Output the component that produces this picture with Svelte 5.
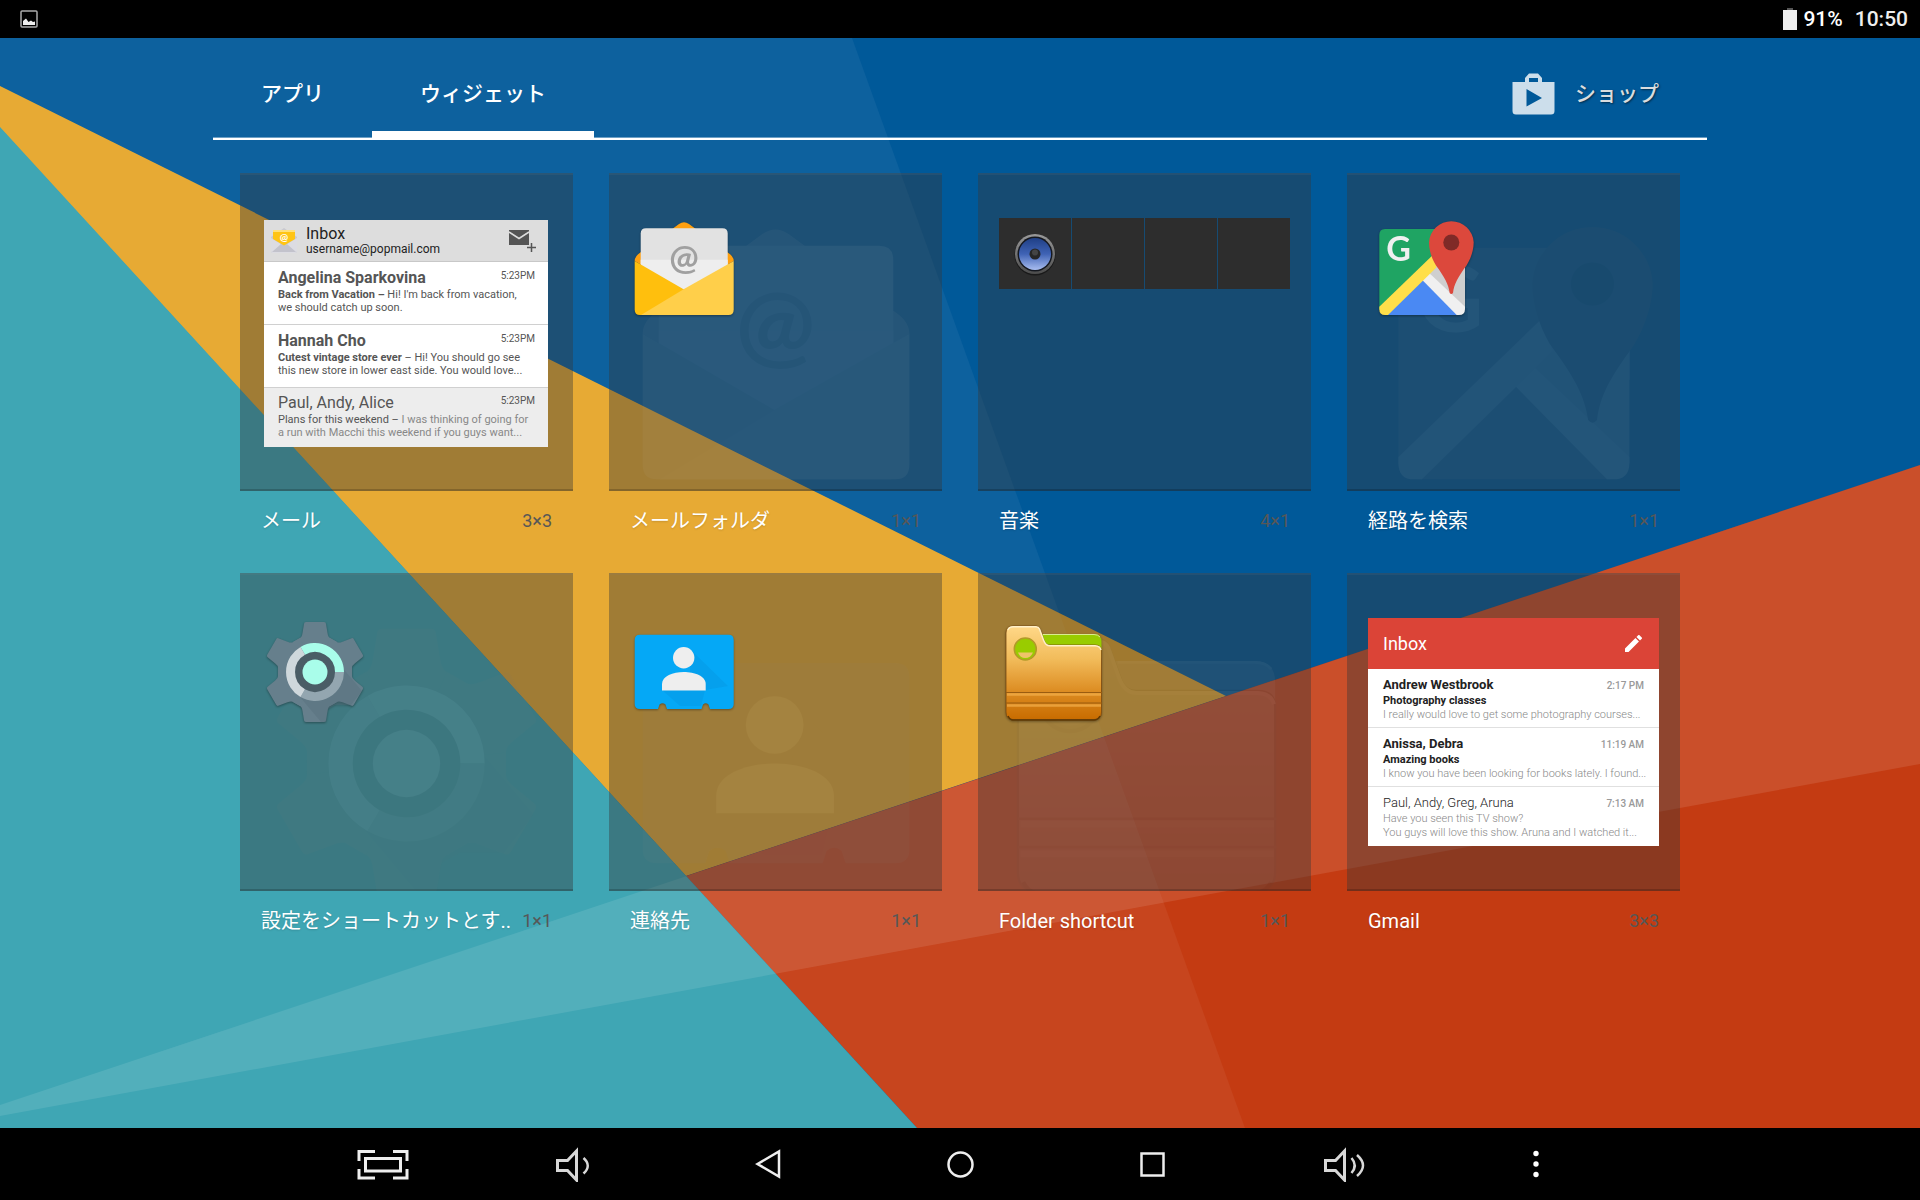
<script>
  const widgets = [
    { name: "メール", size: "3×3", kind: "mail" },
    { name: "メールフォルダ", size: "1×1", kind: "icon", icon: "envelope" },
    { name: "音楽", size: "4×1", kind: "music" },
    { name: "経路を検索", size: "1×1", kind: "icon", icon: "maps" },
    { name: "設定をショートカットとす..", size: "1×1", kind: "icon", icon: "gear" },
    { name: "連絡先", size: "1×1", kind: "icon", icon: "contacts" },
    { name: "Folder shortcut", size: "1×1", kind: "icon", icon: "folder" },
    { name: "Gmail", size: "3×3", kind: "gmail" },
  ];

  const mails = [
    {
      from: "Angelina Sparkovina",
      time: "5:23PM",
      subject: "Back from Vacation –",
      lines: ["Hi! I'm back from vacation,", "we should catch up soon."],
    },
    {
      from: "Hannah Cho",
      time: "5:23PM",
      subject: "Cutest vintage store ever",
      lines: ["– Hi! You should go see", "this new store in lower east side. You would love..."],
    },
    {
      from: "Paul, Andy, Alice",
      time: "5:23PM",
      subject: "Plans for this weekend –",
      lines: ["I was thinking of going for", "a run with Macchi this weekend if you guys want..."],
      read: true,
    },
  ];

  const gmails = [
    {
      from: "Andrew Westbrook",
      time: "2:17 PM",
      subject: "Photography classes",
      text: "I really would love to get some photography courses...",
    },
    {
      from: "Anissa, Debra",
      time: "11:19 AM",
      subject: "Amazing books",
      text: "I know you have been looking for books lately. I found...",
    },
    {
      from: "Paul, Andy, Greg, Aruna",
      time: "7:13 AM",
      subject: "Have you seen this TV show?",
      text: "You guys will love this show. Aruna and I watched it...",
      read: true,
    },
  ];

  const navItems = [
    { icon: "fullscreen", label: "全画面" },
    { icon: "volume-down", label: "音量を下げる" },
    { icon: "back", label: "戻る" },
    { icon: "home", label: "ホーム" },
    { icon: "recents", label: "最近使ったアプリ" },
    { icon: "volume-up", label: "音量を上げる" },
    { icon: "menu", label: "メニュー" },
  ];

  let tab = $state("widgets");

  const teeth = [0, 60, 120, 180, 240, 300];
</script>

{#snippet envelope()}
  <path d="M4.700 43Q4.700 38 11 34L49 6Q54 2.500 59 6L97 34Q103.700 38 103.700 43L54 72Z" fill="#ffa010" />
  <path d="M10.700 15.500Q10.700 10.300 16 10.300H92.500Q97.700 10.300 97.700 15.500V48L54 72L10.700 48Z" fill="#e2e2e2" />
  <path d="M10.700 41.700H97.700V48L54 72L10.700 48Z" fill="#eee" />
  <text class="at" x="54" y="52" text-anchor="middle">@</text>
  <path d="M4.700 43L54 71.500L97 97H10Q4.700 97 4.700 91.500Z" fill="#ffbf0d" />
  <path d="M103.700 43V91.500Q103.700 97 98.500 97H11L54 71Z" fill="#ffcf4a" />
{/snippet}

{#snippet maps()}
  <path d="M17 11H97V60L60 62L11.300 92V17Q11.300 11 17 11Z" fill="#1fa463" />
  <path d="M61 55L97 22V91H90Z" fill="#cfcfcf" />
  <path d="M54.300 61L90 97H18Z" fill="#4a89f3" />
  <path d="M54.300 62L61.300 55L97 88.700V91Q97 97 91 97H88.700Z" fill="#f0f0f0" />
  <path d="M11.300 88.700L68 34L74 44L20 97H17Q11.300 97 11.300 91Z" fill="#ffdf4a" />
  <path d="M68 48L97 30V60L84 76Z" fill="#cfcfcf" />
  <text class="g" x="30.500" y="42.500" text-anchor="middle">G</text>
  <path
    d="M61 24.200A22.400 22.400 0 0 1 105.700 24.200C105.700 33 102 42 98.500 47.500C90 59 86 66 85 75Q83.300 77 81.700 75C80.500 66 76.500 59 68 47.500C64.500 42 61 33 61 24.200Z"
    fill="#dc483c"
  />
  <circle cx="83.300" cy="24.500" r="8" fill="#7f2a27" />
{/snippet}

{#snippet gear()}
  <g transform="translate(54 54)" fill="#667f8c">
    <circle r="36.500" />
    {#each teeth as angle}
      <path
        transform="rotate({angle})"
        d="M-22 -30L-15 -34Q-13 -35 -12.500 -39L-11 -48Q-11 -50 -9 -50H9Q11 -50 11 -48L12.500 -39Q13 -35 15 -34L22 -30L0 0Z"
      />
    {/each}
  </g>
  <path d="M39 79L60 104H65L67 91L74 87L90 87L101 73L75 42Z" fill="#566f7b" opacity="0.4" />
  <circle cx="54" cy="54" r="21" fill="#4a5d66" />
  <g fill="none" stroke-width="9">
    <path d="M41.750 32.800A24.500 24.500 0 0 1 78.500 54" stroke="#a9fdea" />
    <path d="M78.500 54A24.500 24.500 0 0 1 41.750 75.200" stroke="#93a6b0" />
    <path d="M41.750 75.200A24.500 24.500 0 0 1 41.750 32.800" stroke="#cfd8dc" />
  </g>
  <circle cx="54" cy="54" r="12.500" fill="#a9fdea" />
{/snippet}

{#snippet contacts()}
  <path
    d="M10 16.700H98.500Q103.700 16.700 103.700 22V86Q103.700 91 98.500 91H80L78.500 86.500Q75.700 84 73 86.500L71.500 91H37L35.500 86.500Q32.500 84 29.500 86.500L28 91H10Q4.700 91 4.700 86V22Q4.700 16.700 10 16.700Z"
    fill="#05a8f6"
  />
  <path d="M61 32L98 68L75 72L60 55ZM32 72H75L71 88H50Z" fill="#0590d8" opacity="0.3" />
  <circle cx="53.700" cy="39.700" r="10.700" fill="#eee" />
  <path d="M32 72.500V66C32 58 43 54 53.800 54S75.700 58 75.700 66V72.500Z" fill="#eee" />
{/snippet}

{#snippet folder()}
  <defs>
    <linearGradient id="folder-front" x1="0" y1="0" x2="0" y2="1">
      <stop offset="0" stop-color="#ffd888" />
      <stop offset="0.350" stop-color="#f2bc5b" />
      <stop offset="0.700" stop-color="#dc8c22" />
      <stop offset="1" stop-color="#c86c00" />
    </linearGradient>
  </defs>
  <path d="M40 16H95Q102.500 16 102.500 24V40H40Z" fill="#99cc00" />
  <path d="M44 16.500H95Q99 16.500 101 19" fill="none" stroke="#d8ec90" />
  <path
    d="M7 15Q7 8 14 8H37Q40 8 41 11L45 22Q46.500 27 51 27H96Q102.500 27 102.500 33V94Q102.500 101.500 95 101.500H14Q7 101.500 7 94Z"
    fill="url(#folder-front)"
    stroke="#7a4a10"
    stroke-width="0.800"
  />
  <path d="M9 12Q10 8.800 14 8.800H37Q39.500 8.800 40.500 11L44.500 22Q46.500 27.800 51 27.800H96Q101 28 102 32" fill="none" stroke="#fff0c8" stroke-width="1.500" />
  <path d="M7 74.500H103M7 85H103" stroke="#9a5c10" />
  <path d="M8 76.500H102M8 87.500H102" stroke="#f3b04c" stroke-width="2.500" opacity="0.700" />
  <path d="M9 98Q11 102 14 102H95Q99 102 101 98" fill="none" stroke="#5e3804" stroke-width="1.500" />
  <circle cx="26.300" cy="31" r="11" fill="#99cc00" stroke="#b19a28" stroke-width="1.500" />
  <path d="M19 34.500H34Q31.500 40 26.300 40T19 34.500Z" fill="#efc36a" />
{/snippet}

{#snippet artwork(name)}
  {#if name === "envelope"}
    {@render envelope()}
  {:else if name === "maps"}
    {@render maps()}
  {:else if name === "gear"}
    {@render gear()}
  {:else if name === "contacts"}
    {@render contacts()}
  {:else}
    {@render folder()}
  {/if}
{/snippet}

{#snippet mailWidget()}
  <div class="mail">
    <div class="mail__header">
      <svg class="mail__logo" viewBox="0 0 28 28" aria-hidden="true">
        <path d="M1 10L14 1L27 10V24Q27 26 25 26H3Q1 26 1 24Z" fill="#c9c9cf" />
        <path d="M1 11V24Q1 26 3 26H25Q27 26 27 24V11L14 19Z" fill="#dcdce2" />
        <path d="M2 25L11 17L14 18L17 17L26 25Z" fill="#c3c3cc" />
        <path d="M3 3H25V12L14 18.500L3 12Z" fill="#ffc414" />
        <path d="M3 3H25V5H3Z" fill="#ffe07a" />
        <text class="mail__at" x="14" y="13.500" text-anchor="middle">@</text>
      </svg>
      <div class="mail__account">
        <span class="mail__title">Inbox</span>
        <span class="mail__address">username@popmail.com</span>
      </div>
      <svg class="mail__compose" viewBox="0 0 28 24" aria-hidden="true">
        <path d="M0 1H20V16H0Z" fill="#555" />
        <path d="M0 3L10 9.500L20 3" fill="none" stroke="#ddd" stroke-width="1.500" />
        <path d="M22.500 14V23M18 18.500H27" stroke="#555" stroke-width="1.500" />
      </svg>
    </div>
    {#each mails as mail}
      <div class="mail__row" class:mail__row--read={mail.read}>
        <div class="mail__top">
          <span class="mail__from">{mail.from}</span>
          <span class="mail__time">{mail.time}</span>
        </div>
        <div class="mail__text"><span class="mail__subject">{mail.subject}</span> {mail.lines[0]}</div>
        <div class="mail__text">{mail.lines[1]}</div>
      </div>
    {/each}
  </div>
{/snippet}

{#snippet musicWidget()}
  <div class="music">
    <div class="music__tile">
      <svg class="music__speaker" viewBox="0 0 44 44" aria-hidden="true">
        <defs>
          <linearGradient id="cone" x1="0" y1="0" x2="0" y2="1">
            <stop offset="0" stop-color="#1f3f86" />
            <stop offset="0.500" stop-color="#3f63b5" />
            <stop offset="1" stop-color="#a9bdf0" />
          </linearGradient>
          <linearGradient id="rim" x1="0" y1="0" x2="0" y2="1">
            <stop offset="0" stop-color="#9a9a9a" />
            <stop offset="1" stop-color="#4c4c4c" />
          </linearGradient>
        </defs>
        <circle cx="22" cy="23" r="20.500" fill="#1a1a1a" />
        <circle cx="22" cy="22" r="20" fill="url(#rim)" />
        <circle cx="22" cy="22" r="17.500" fill="#15181f" />
        <circle cx="22" cy="22" r="16" fill="url(#cone)" />
        <circle cx="22" cy="22" r="5.500" fill="#262626" />
        <circle cx="22" cy="20.500" r="3" fill="#444" />
      </svg>
    </div>
    <div class="music__tile"></div>
    <div class="music__tile"></div>
    <div class="music__tile"></div>
  </div>
{/snippet}

{#snippet gmailWidget()}
  <div class="gmail">
    <div class="gmail__header">
      <span>Inbox</span>
      <svg class="gmail__pencil" viewBox="3 3 18 18" aria-hidden="true">
        <path
          d="M3 17.250V21h3.750L17.810 9.940l-3.750-3.750L3 17.250zM20.710 7.040a1 1 0 0 0 0-1.410l-2.340-2.340a1 1 0 0 0-1.410 0l-1.830 1.830 3.750 3.750 1.830-1.830z"
          fill="#fff"
        />
      </svg>
    </div>
    {#each gmails as mail}
      <div class="gmail__row" class:gmail__row--read={mail.read}>
        <div class="gmail__top">
          <span class="gmail__from">{mail.from}</span>
          <span class="gmail__time">{mail.time}</span>
        </div>
        <div class="gmail__subject">{mail.subject}</div>
        <div class="gmail__text">{mail.text}</div>
      </div>
    {/each}
  </div>
{/snippet}

<div class="screen">
  <header class="status">
    <svg class="status__image" viewBox="0 0 18 18" aria-hidden="true">
      <rect x="1" y="1" width="16" height="16" rx="1" fill="none" stroke="#aaa" stroke-width="1.500" />
      <path d="M3 15V11L6 8.500L8.500 12L11 10.500L13 12L15 11.500V15Z" fill="#eee" />
    </svg>
    <div class="status__right">
      <svg class="status__battery" viewBox="0 0 14 22" aria-hidden="true">
        <rect x="4" width="6" height="3" fill="#555" />
        <rect y="2" width="14" height="20" fill="#eee" />
      </svg>
      <span class="status__charge">91%</span>
      <time class="status__clock">10:50</time>
    </div>
  </header>

  <main class="drawer">
    <svg class="wallpaper" viewBox="0 38 1920 1090" preserveAspectRatio="none" aria-hidden="true">
      <rect y="38" width="1920" height="1090" fill="#005999" />
      <path d="M0 86L1226 696L686 876L0 128Z" fill="#e6a62a" />
      <path d="M1920 465L686 876L917 1128H1920Z" fill="#c43b12" />
      <path d="M0 38H852L1245 1128H0Z" fill="#fff" opacity="0.050" />
      <path d="M0 127L917 1128H0Z" fill="#3fa6b4" />
      <path d="M0 1105L1920 465V764L0 1116Z" fill="#fff" opacity="0.100" />
    </svg>

    <div class="content">
      <nav class="tabs">
        <button class="tab" class:tab--active={tab === "apps"} onclick={() => (tab = "apps")}>アプリ</button>
        <button class="tab" class:tab--active={tab === "widgets"} onclick={() => (tab = "widgets")}>ウィジェット</button>
        <button class="shop">
          <svg class="shop__icon" viewBox="0 0 43 42" aria-hidden="true">
            <path
              fill-rule="evenodd"
              d="M13 9V5L17 0.500H26L30 5V9H42.500V38Q42.500 41.500 39 41.500H4Q0.500 41.500 0.500 38V9ZM17 9H26V5H17ZM14.500 16V33.500L30 25Z"
              fill="#ccdeeb"
            />
          </svg>
          ショップ
        </button>
      </nav>

      <ul class="grid">
        {#each widgets as widget}
          <li class="widget">
            <div class="card">
              {#if widget.kind === "mail"}
                {@render mailWidget()}
              {:else if widget.kind === "music"}
                {@render musicWidget()}
              {:else if widget.kind === "gmail"}
                {@render gmailWidget()}
              {:else}
                <svg class="card__ghost" viewBox="0 0 108 108" aria-hidden="true">
                  {@render artwork(widget.icon)}
                </svg>
                <svg class="card__icon" viewBox="0 0 108 108" aria-hidden="true">
                  {@render artwork(widget.icon)}
                </svg>
              {/if}
            </div>
            <div class="caption">
              <span class="caption__name">{widget.name}</span>
              <span class="caption__size">{widget.size}</span>
            </div>
          </li>
        {/each}
      </ul>
    </div>
  </main>

  <footer class="navbar">
    {#each navItems as item}
      <button class="navbar__button" aria-label={item.label}>
        <svg class="navbar__icon" viewBox="-28 -18 56 36" aria-hidden="true">
          {#if item.icon === "fullscreen"}
            <path d="M-25 -3V-12.500H-9M9 -12.500H23V-3M23 5V14H9M-9 14H-25V5" />
            <rect x="-18.500" y="-5.500" width="35" height="12.500" />
          {:else if item.icon === "volume-down"}
            <path d="M0.500 -13V16L-8.500 6.500H-18.500V-3.500H-8.500Z" class="dim" />
            <path d="M7.500 -6Q16 1.500 7.500 9.500" class="dim thin" />
          {:else if item.icon === "back"}
            <path d="M-10.500 0L11 -12.500V12.500Z" class="thin" />
          {:else if item.icon === "home"}
            <circle cx="0.500" cy="0.500" r="12" class="thin" />
          {:else if item.icon === "recents"}
            <rect x="-10.500" y="-10.500" width="22" height="22" class="thin" />
          {:else if item.icon === "volume-up"}
            <path d="M0.500 -13V16L-8.500 6.500H-18.500V-3.500H-8.500Z" class="dim" />
            <path d="M7.500 -6Q14 1.500 7.500 9M13 -9Q25 1.500 13 12" class="dim thin" />
          {:else}
            <g class="dots">
              <circle cy="-10.500" r="2.700" />
              <circle cy="0" r="2.700" />
              <circle cy="10.500" r="2.700" />
            </g>
          {/if}
        </svg>
      </button>
    {/each}
  </footer>
</div>

<style>
  :global(body) {
    margin: 0;
    background-color: #000;
  }

  .screen {
    min-height: 100vh;
    display: flex;
    flex-direction: column;
    font-family: Roboto, "Noto Sans CJK JP", sans-serif;
    color: #fff;
  }

  button {
    margin: 0;
    padding: 0;
    border: 0;
    background: none;
    color: inherit;
    font: inherit;
    cursor: pointer;
  }

  .status {
    height: 38px;
    padding: 0 12px 0 20px;
    display: flex;
    align-items: center;
    justify-content: space-between;
    background-color: #000;
  }

  .status__image {
    width: 18px;
    height: 18px;
  }

  .status__right {
    display: flex;
    align-items: center;
    font-size: 21px;
    font-weight: 500;
    line-height: 24px;
  }

  .status__battery {
    width: 14px;
    height: 22px;
    margin-right: 6px;
  }

  .status__clock {
    margin-left: 12px;
    color: #eee;
  }

  .drawer {
    position: relative;
    flex: 1;
  }

  .wallpaper {
    position: absolute;
    inset: 0;
    width: 100%;
    height: 100%;
  }

  .content {
    position: relative;
    margin: 0 213px;
  }

  .tabs {
    height: 100px;
    display: flex;
    border-bottom: 2px solid #fff;
    box-shadow: inset 0 -1px rgba(255, 255, 255, 0.4);
    font-size: 21px;
    font-weight: 500;
    line-height: 24px;
  }

  .tab {
    padding: 12px 48px 0;
    border-top: 7px solid transparent;
    border-bottom: 7px solid transparent;
  }

  .tab--active {
    border-bottom-color: #fff;
  }

  .shop {
    margin-left: auto;
    padding: 12px 48px 0 0;
    display: flex;
    align-items: center;
    gap: 20px;
    color: #d9dcde;
    text-shadow: 1px 1px 2px rgba(0, 0, 0, 0.5);
  }

  .shop__icon {
    width: 43px;
    height: 42px;
  }

  .grid {
    margin: 0;
    padding: 33px 27px 0;
    display: grid;
    grid-template-columns: repeat(4, minmax(0, 1fr));
    column-gap: 36px;
    list-style: none;
  }

  .card {
    position: relative;
    height: 318px;
    box-sizing: border-box;
    padding: 45px 21px 0;
    overflow: hidden;
    background-color: rgba(55, 55, 55, 0.4);
    box-shadow:
      inset 0 2px rgba(130, 130, 130, 0.12),
      inset 0 -2px rgba(0, 0, 0, 0.18);
  }

  .card__icon {
    position: relative;
    display: block;
    width: 108px;
    height: 108px;
    filter: drop-shadow(0 1px 1px rgba(0, 0, 0, 0.35));
  }

  .card__ghost {
    position: absolute;
    top: 45px;
    left: 21px;
    width: calc(100% - 42px);
    filter: grayscale(1);
    opacity: 0.06;
  }

  .at {
    font-family: Lato, sans-serif;
    font-size: 35px;
    font-weight: 700;
    fill: #a0a0a0;
  }

  .g {
    font-family: Lato, sans-serif;
    font-size: 34px;
    font-weight: 700;
    fill: #f0f0f0;
  }

  .caption {
    height: 82px;
    box-sizing: border-box;
    padding: 16px 21px 0;
    display: flex;
    justify-content: space-between;
    line-height: 28px;
    white-space: nowrap;
  }

  .caption__name {
    font-size: 20px;
    text-shadow: 0 1px 2px rgba(0, 0, 0, 0.15);
  }

  .caption__name:lang(ja) {
    font-weight: 500;
  }

  .caption__size {
    font-size: 18px;
    color: #575757;
  }

  .mail {
    margin: 2px 4px 0 3px;
    background-color: #fff;
    color: #555;
  }

  .mail__header {
    height: 42px;
    box-sizing: border-box;
    padding: 0 11px 0 6px;
    display: flex;
    align-items: center;
    background-color: #ddd;
    border-bottom: 1px solid #c8c8c8;
  }

  .mail__logo {
    width: 28px;
    height: 28px;
  }

  .mail__at {
    font-family: Lato, sans-serif;
    font-size: 10px;
    font-weight: 700;
    fill: #fff;
  }

  .mail__account {
    margin-left: 8px;
    flex: 1;
    display: flex;
    flex-direction: column;
    color: #222;
  }

  .mail__title {
    font-size: 16px;
    line-height: 16px;
  }

  .mail__address {
    font-size: 12px;
    line-height: 14px;
  }

  .mail__compose {
    width: 28px;
    height: 24px;
  }

  .mail__row {
    height: 63px;
    box-sizing: border-box;
    padding: 6px 0 0 14px;
    border-bottom: 1px solid #d0d0d0;
    white-space: nowrap;
  }

  .mail__row--read {
    height: 59px;
    padding-top: 5px;
    border-bottom: 0;
    background-color: #ededed;
    color: #888;
  }

  .mail__top {
    display: flex;
    justify-content: space-between;
    padding-right: 13px;
  }

  .mail__from {
    font-size: 16px;
    line-height: 20px;
    font-weight: 700;
  }

  .mail__time {
    font-size: 10px;
    line-height: 16px;
    color: #555;
  }

  .mail__text {
    font-size: 11px;
    line-height: 13px;
  }

  .mail__subject {
    font-weight: 700;
  }

  .mail__row--read .mail__from,
  .mail__row--read .mail__subject {
    font-weight: 400;
    color: #555;
  }

  .music {
    display: grid;
    grid-template-columns: repeat(4, 1fr);
    gap: 1px;
  }

  .music__tile {
    height: 71px;
    display: flex;
    align-items: center;
    justify-content: center;
    background-color: #2d2d2d;
  }

  .music__speaker {
    width: 44px;
    height: 44px;
  }

  .gmail {
    background-color: #fff;
    color: #999;
  }

  .gmail__header {
    height: 51px;
    padding: 0 17px 0 15px;
    display: flex;
    align-items: center;
    justify-content: space-between;
    background-color: #db4437;
    color: #fff;
    font-size: 18px;
    line-height: 24px;
  }

  .gmail__pencil {
    width: 17px;
    height: 17px;
  }

  .gmail__row {
    height: 59px;
    box-sizing: border-box;
    padding: 8px 15px 0;
    border-bottom: 1px solid #e0e0e0;
    white-space: nowrap;
  }

  .gmail__row--read {
    border-bottom: 0;
  }

  .gmail__top {
    display: flex;
    justify-content: space-between;
    align-items: center;
  }

  .gmail__from {
    font-size: 13px;
    line-height: 16px;
    font-weight: 700;
    color: #222;
  }

  .gmail__time {
    font-size: 10px;
    font-weight: 500;
  }

  .gmail__subject {
    font-size: 11px;
    line-height: 15px;
    font-weight: 700;
    color: #222;
  }

  .gmail__text {
    font-size: 11px;
    line-height: 14px;
    font-weight: 300;
    color: #888;
  }

  .gmail__row--read .gmail__from {
    font-weight: 300;
  }

  .gmail__row--read .gmail__subject {
    font-weight: 300;
    color: #888;
  }

  .navbar {
    height: 72px;
    padding: 0 15%;
    display: flex;
    background-color: #000;
  }

  .navbar__button {
    flex: 1;
    display: flex;
    align-items: center;
    justify-content: center;
  }

  .navbar__icon {
    width: 56px;
    height: 36px;
    fill: none;
    stroke: #eee;
    stroke-width: 3;
  }

  .dim {
    stroke: #d8d8d8;
  }

  .thin {
    stroke-width: 2.5;
  }

  .dots {
    fill: #fff;
    stroke: none;
  }
</style>
